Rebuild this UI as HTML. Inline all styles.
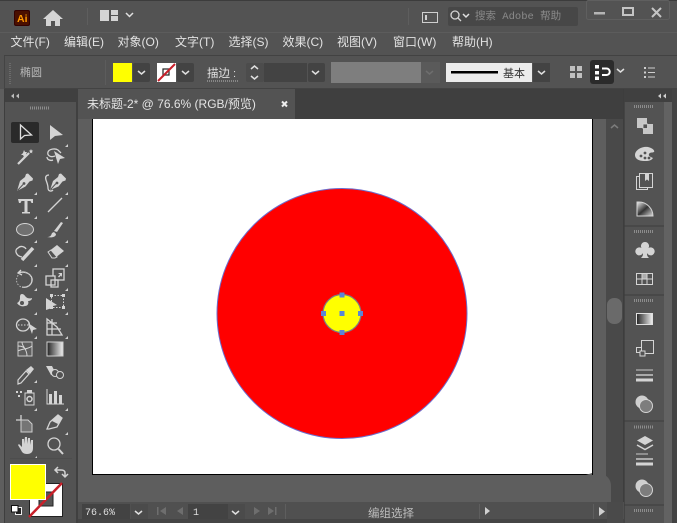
<!DOCTYPE html>
<html><head><meta charset="utf-8"><style>
html,body{margin:0;padding:0;background:#535353;width:677px;height:523px;overflow:hidden}
svg{display:block}
text{font-family:"Liberation Sans","Noto Sans CJK SC",sans-serif}
.m{font-size:12px;fill:#e2e2e2}
.ic{fill:none;stroke:#d4d4d4;stroke-width:1.3}
.f{fill:#d4d4d4}
.ch{fill:none;stroke:#e0e0e0;stroke-width:1.5}
.d{fill:#434343}
</style></head><body>
<svg width="677" height="523" viewBox="0 0 677 523" xmlns="http://www.w3.org/2000/svg">
<rect width="677" height="523" fill="#535353"/>
<!-- bars -->
<rect x="0" y="0" width="677" height="1" fill="#3c3c3c"/>
<rect x="0" y="32" width="677" height="1" fill="#5c5c5c"/>
<rect x="4" y="55" width="673" height="1" fill="#424242"/>
<rect x="4" y="56" width="1" height="33" fill="#444"/>
<rect x="5" y="88" width="672" height="1" fill="#434343"/>
<!-- title -->
<rect x="14" y="10" width="16" height="16" rx="2" fill="#330000"/>
<rect x="15" y="11" width="14" height="14" rx="1.5" fill="#4a0f00"/>
<text x="17" y="22" font-size="10.5" font-weight="bold" fill="#ff9a00">Ai</text>
<path class="f" d="M53 10l10 9h-3v7h-5v-5h-4v5h-5v-7h-3z"/>
<rect x="87" y="8" width="1" height="17" fill="#5e5e5e"/>
<path class="f" d="M100 10h9v11h-9zM111 10h7v5h-7zM111 16h7v5h-7z"/>
<path class="ch" d="M126 13l3.500 3.500 3.500-3.500"/>
<rect x="408" y="8" width="1" height="17" fill="#5e5e5e"/>
<rect x="422.500" y="12.500" width="15" height="10" fill="none" stroke="#cfcfcf"/>
<path d="M426 15v5" stroke="#cfcfcf" fill="none" stroke-width="2"/>
<rect x="448" y="7" width="130" height="19" rx="2" fill="#474747"/>
<circle cx="455" cy="15" r="4" class="ic"/><path class="ic" d="M458 18l3 3"/>
<path class="ch" d="M463 14l3 3 3-3" stroke-width="1.200"/>
<text x="475" y="19" font-size="10.500" fill="#8a8a8a" style="font-family:'Liberation Mono','Noto Sans CJK SC',monospace">搜索 Adobe 帮助</text>
<rect x="586.500" y="0.500" width="83" height="19" rx="2" fill="none" stroke="#5f5f5f"/>
<rect x="594" y="12" width="11" height="2.500" fill="#b5b5b5"/>
<rect x="623" y="8" width="10" height="7" fill="none" stroke="#c5c5c5" stroke-width="2"/>
<path d="M652 8l9 9M661 8l-9 9" stroke="#c5c5c5" stroke-width="2" fill="none"/>
<!-- menu -->
<text class="m" x="10.500" y="46">文件(F)</text>
<text class="m" x="64" y="46">编辑(E)</text>
<text class="m" x="117.500" y="46">对象(O)</text>
<text class="m" x="175" y="46">文字(T)</text>
<text class="m" x="228.500" y="46">选择(S)</text>
<text class="m" x="282.500" y="46">效果(C)</text>
<text class="m" x="337" y="46">视图(V)</text>
<text class="m" x="393" y="46">窗口(W)</text>
<text class="m" x="452" y="46">帮助(H)</text>
<!-- control -->
<path d="M10 63v21" stroke="#6b6b6b" stroke-width="2" stroke-dasharray="1 1"/>
<text x="20" y="76" font-size="11" fill="#b8b8b8">椭圆</text>
<rect x="105" y="60" width="1" height="25" fill="#5c5c5c"/>
<rect x="113" y="63" width="19" height="19" fill="#ffff00"/>
<rect x="133" y="63" width="17" height="19" rx="2" class="d"/>
<path class="ch" d="M138 71l3.500 3 3.500-3"/>
<rect x="157" y="63" width="19" height="19" fill="#fff"/>
<rect x="163" y="69" width="6" height="6" fill="none" stroke="#222" stroke-width="1.200"/>
<path d="M158 81l17-17" stroke="#c8202a" stroke-width="2"/>
<rect x="177" y="63" width="17" height="19" rx="2" class="d"/>
<path class="ch" d="M182 71l3.500 3 3.500-3"/>
<text x="207" y="77" font-size="11.500" fill="#e0e0e0">描边</text>
<path d="M207 81h32" stroke="#bbb" stroke-dasharray="1 1"/>
<text x="233" y="77" font-size="11" fill="#ddd">:</text>
<rect x="246" y="63" width="18" height="19" rx="2" fill="#4c4c4c"/>
<path class="ch" d="M251 69l3.500-3 3.500 3M251 76l3.500 3 3.500-3"/>
<rect x="264" y="63" width="43" height="19" class="d"/>
<rect x="308" y="63" width="17" height="19" rx="2" class="d"/>
<path class="ch" d="M312 71l3.500 3 3.500-3"/>
<rect x="331" y="62" width="90" height="21" fill="#7e7e7e"/>
<rect x="421" y="62" width="19" height="21" fill="#5a5a5a"/>
<path d="M426 71l3.500 3 3.500-3" fill="none" stroke="#6e6e6e" stroke-width="1.500"/>
<rect x="446" y="63" width="86" height="19" fill="#ececec"/>
<rect x="451" y="71" width="47" height="2.500" fill="#000"/>
<text x="503" y="77" font-size="11" fill="#333">基本</text>
<rect x="533" y="63" width="17" height="19" class="d"/>
<path class="ch" d="M538 71l3.500 3 3.500-3"/>
<path class="f" d="M570 66h5v5h-5zM577 66h5v5h-5zM570 73h5v5h-5zM577 73h5v5h-5z" opacity=".85"/>
<rect x="590" y="60" width="24" height="24" rx="3" fill="#2b2b2b"/>
<rect x="595" y="65" width="4" height="3.500" fill="#fff"/><rect x="595" y="71" width="4" height="3.500" fill="#fff"/><rect x="595" y="76.500" width="4" height="3.500" fill="#fff"/>
<path d="M602 68.500h4.500a3.200 3.200 0 0 1 0 6.500h-4.500" fill="none" stroke="#fff" stroke-width="2"/>
<path class="ch" d="M617 69l3.500 3 3.500-3"/>
<path d="M644 67h2v2h-2zM644 71.500h2v2h-2zM644 76h2v2h-2z" fill="#cfcfcf"/>
<path d="M648 68h7M648 72.500h7M648 77h7" stroke="#cfcfcf"/>
<!-- tab row -->
<rect x="0" y="89" width="677" height="11" fill="#404040"/>
<rect x="78" y="89" width="546" height="30" fill="#3f3f3f"/>
<rect x="78" y="89" width="217" height="30" fill="#535353"/>
<text x="87" y="108" font-size="12" fill="#e4e4e4">未标题-2* @ 76.6% (RGB/预览)</text>
<path d="M282 101.500l5 5M287 101.500l-5 5" stroke="#eee" stroke-width="2"/>
<!-- left toolbar -->
<rect x="0" y="89" width="5" height="434" fill="#5e5e5e"/>
<rect x="5" y="89" width="71" height="412" fill="#535353"/>
<rect x="5" y="89" width="71" height="13" fill="#404040"/>
<rect x="4" y="89" width="1" height="434" fill="#3e3e3e"/>
<rect x="76" y="89" width="2" height="434" fill="#404040"/>
<rect x="5" y="501" width="71" height="22" fill="#535353"/>
<path d="M14 93.500l-3 2.500 3 2.500zM19 93.500l-3 2.500 3 2.500z" fill="#bcbcbc"/>
<path d="M30 108h20" stroke="#8c8c8c" stroke-width="3" stroke-dasharray="1 1"/>
<rect x="11" y="122" width="28" height="21" rx="2" fill="#2a2a2a"/>
<!-- row 1 -->
<path d="M20.500 125v14l4-3.500 7-.5z" fill="none" stroke="#e0e0e0" stroke-width="1.300"/>
<path class="f" d="M50 125v15l5-4 8-1z"/>
<!-- row 2 -->
<path d="M18 164l11-11" stroke="#d4d4d4" stroke-width="2.200"/>
<path class="f" d="M24 150l1 2 2 0-1 2 1 2-2 0-1 1-1-2-2 0 2-2zM31 149l.7 1.500 1.500.3-1.200 1 .3 1.600-1.300-.9-1.300.9.300-1.600-1.200-1 1.500-.3z"/>
<path class="ic" d="M55 156c-5 2-8-1-7-4 1-3 7-4 10-2l3 3M47 157c0 3 4 4 6 3"/>
<path class="f" d="M54 151l11 7-5 1-2 5z"/>
<!-- row 3: pen and curvature pen -->
<path class="f" d="M17 191l3-10 5-4 1-3 2-.5 5 5-.5 2-3 1-4 5z"/>
<path d="M17.500 190.500l5.500-6" stroke="#535353" stroke-width="1"/><circle cx="24" cy="183.500" r="1.400" fill="#535353"/>
<path class="f" d="M50 190l3-9 5-4 1-3 2-.5 5 5-.5 2-3 1-4 5z"/>
<path d="M50.500 189.500l5.500-6" stroke="#535353" stroke-width="1"/><circle cx="57" cy="183" r="1.400" fill="#535353"/>
<path class="ic" d="M49 175c-3 0-4 2-3 5s2 5 2 8c0 3 3 4 5 2"/>
<!-- row 4 -->
<path d="M18 199h15v4h-1.500l-1-2h-3v11h2.500v1.500h-8v-1.500h2.500v-11h-3l-1 2h-1.500z" fill="#d4d4d4"/>
<path d="M48 212l14-14" stroke="#d4d4d4" stroke-width="1.300"/>
<!-- row 5 -->
<ellipse cx="25" cy="229.500" rx="8.500" ry="6" fill="#707070" stroke="#d4d4d4" stroke-width="1"/>
<path class="f" d="M47 237c3 0 4-1 5-4l2-1 2 2c0 3-4 4-9 3zM54 231l7-9 2 1-6 9z"/>
<!-- row 6 -->
<path class="ic" d="M22 257c-6-1-8-7-4-9 3-3 7-1 8 1"/>
<path d="M22 260l11-12" stroke="#d4d4d4" stroke-width="3.500"/>
<path class="f" d="M48 252l9-7 7 6-9 7z"/><path d="M48 252l3-2 6 7-2 1h-3z" fill="#535353" stroke="#d4d4d4"/>
<!-- row 7 -->
<path class="ic" d="M21 270l-3 3 4 2M18 273c8-3 15 2 14 8-1 5-6 7-10 6" /><circle cx="24" cy="280" r="7.500" fill="none" stroke="#b8b8b8" stroke-width="1" stroke-dasharray="1.500 1.500"/>
<rect x="53" y="269" width="11" height="11" class="ic"/><rect x="46" y="276" width="9" height="9" class="ic" style="fill:#535353"/><rect x="51" y="280" width="7" height="7" class="ic"/>
<path class="f" d="M58 273h4v4l-1-1.500-2 2-1-1 2-2z"/>
<!-- row 8 -->
<path class="f" d="M17 303c2-1 3-3 3-5s0-4 2-4 3 2 4 3 3 2 6 1c0 2-2 3-4 3 1 2 0 5-3 5-3 1-6 0-8-3z"/><circle cx="22" cy="303" r="2" fill="#535353"/>
<path class="f" d="M46 298l11 7-4 1-1 2-6 2z"/>
<rect x="51.500" y="295.500" width="12" height="12" fill="none" stroke="#d4d4d4" stroke-dasharray="1.500 1.500"/>
<path class="f" d="M50 294h3v3h-3zM62 294h3v3h-3zM62 306h3v3h-3zM50 306h3v3h-3z"/>
<!-- row 9 -->
<ellipse cx="23" cy="325" rx="6.500" ry="6" class="ic"/><path d="M18 325h11" stroke="#d4d4d4" stroke-dasharray="1.500 1.500"/>
<path class="f" d="M28 323l9 6-4 1-1 4z"/>
<path class="ic" d="M47 319v16h15l-5-8zM47 323h10M47 329h14M52 319v16" stroke-width="1"/>
<!-- row 10 -->
<rect x="18" y="342" width="14" height="14" fill="#5e5e5e" stroke="#c8c8c8"/>
<path d="M18 351c5-3 9-1 14-5M22 342c0 5 5 6 5 14M18 346c4 0 6 1 8 4" stroke="#d4d4d4" fill="none"/>
<rect x="47" y="342" width="16" height="14" fill="url(#gr)" stroke="#cfcfcf"/>
<!-- row 11 -->
<path d="M18 380l8-9 3 3-8 9-3 1z" fill="none" stroke="#d4d4d4" stroke-width="1.200"/>
<path class="f" d="M26 370l5-4 3 3-4 5z"/>
<path class="f" d="M46 366h6l2 4 2 1v5l-5-1z"/><circle cx="55" cy="373" r="3.500" fill="#535353" stroke="#d4d4d4"/><circle cx="60" cy="375" r="3.500" fill="#535353" stroke="#d4d4d4"/>
<!-- row 12 -->
<path class="f" d="M16 391h2v2h-2zM20 391h2v2h-2zM18 395h2v2h-2z"/>
<rect x="25" y="393" width="9" height="12" fill="none" stroke="#d4d4d4"/><circle cx="29.500" cy="399" r="2.500" fill="none" stroke="#d4d4d4" stroke-width="1.500"/><rect x="27" y="390" width="5" height="3" fill="#d4d4d4"/>
<path d="M47 389v15h17" fill="none" stroke="#d4d4d4"/><path class="f" d="M49 394h3v10h-3zM54 391h3v13h-3zM59 395h3v9h-3z"/>
<!-- row 13 -->
<path class="ic" d="M16 420h5M21 415v5"/>
<path d="M21 420h7l4 4v8H21z" fill="#757575" stroke="#cfcfcf"/>
<path class="ic" d="M47 429l3-7 8-7 4 3-5 9-8 2z"/><path class="f" d="M52 421l6-6 4 3-4 6z"/>
<!-- row 14 -->
<path class="f" d="M19 444l3 3v-8h2v5l1-7h2v7l1-6h2v7l1-5h2v8c0 4-2 6-6 6-4 0-5-2-6-4l-3-5z"/>
<circle cx="54" cy="444" r="6" class="ic"/><path d="M58.500 449l4.500 5" stroke="#d4d4d4" stroke-width="2"/>
<!-- tool arrows -->
<g fill="#cfcfcf">
<path d="M37 195v-3l-3 3zM68 195v-3l-3 3zM37 219v-3l-3 3zM68 219v-3l-3 3zM37 243v-3l-3 3zM68 243v-3l-3 3zM37 267v-3l-3 3zM68 267v-3l-3 3zM37 291v-3l-3 3zM68 291v-3l-3 3zM37 315v-3l-3 3zM68 315v-3l-3 3zM37 339v-3l-3 3zM68 339v-3l-3 3zM37 383v-3l-3 3zM68 435v-3l-3 3zM37 459v-3l-3 3zM68 147v-3l-3 3zM37 411v-3l-3 3zM68 411v-3l-3 3z"/>
</g>
<rect x="10" y="458" width="62" height="1" fill="#4d4d4d"/>
<!-- color -->
<rect x="29.500" y="483.500" width="33" height="33" fill="#fff" stroke="#222"/>
<rect x="39" y="492" width="14" height="14" fill="#555" stroke="#222" stroke-width="1"/>
<path d="M29 517l33-34" stroke="#c8202a" stroke-width="2.500"/>
<rect x="10.500" y="464.500" width="35" height="35" fill="#ffff00" stroke="#fff"/>
<path d="M55 470h6c3 0 4 1 4 3v3M62 474l3 3 3-3M58 467l-3 3 3 3" fill="none" stroke="#d4d4d4" stroke-width="1.500"/>
<rect x="15.500" y="507.500" width="6" height="7" fill="#222" stroke="#eee"/>
<rect x="11.500" y="505.500" width="6.500" height="6.500" fill="#fff" stroke="#111"/>
<!-- canvas -->
<rect x="78" y="119" width="546" height="383" fill="#5e5e5e"/>
<rect x="92" y="119" width="501" height="356" fill="#000"/>
<rect x="93" y="119" width="499" height="355" fill="#fff"/>
<path d="M586 475l6-2v2z" fill="#5e5e5e"/>
<path d="M593 475h13v25H78v-25z" fill="#5e5e5e"/>
<rect x="606" y="119" width="17" height="383" fill="#494949"/>
<rect x="623" y="89" width="1" height="434" fill="#3d3d3d"/>
<path d="M611 128l3.500-3 3.500 3" fill="none" stroke="#7c7c7c" stroke-width="1.500"/>
<rect x="607" y="298" width="15" height="26" rx="7" fill="#6a6a6a"/>
<path d="M593 474h7c6 0 11 5 11 12v16h-18z" fill="#5e5e5e"/>
<!-- circles -->
<circle cx="342" cy="313.500" r="125" fill="#ff0000" stroke="#6c6ccc" stroke-width="1"/>
<circle cx="342" cy="313.500" r="19" fill="#ffff00" stroke="#7d7d80" stroke-width="1.200"/>
<g fill="#5a86d8">
<rect x="339.500" y="311" width="5" height="5"/>
<rect x="339.500" y="292.500" width="5" height="5"/>
<rect x="339.500" y="330" width="5" height="5"/>
<rect x="321" y="311" width="5" height="5"/>
<rect x="358" y="311" width="5" height="5"/>
</g>
<!-- status bar -->
<rect x="78" y="502" width="546" height="21" fill="#505050"/>
<rect x="78" y="519" width="546" height="4" fill="#454545"/>
<rect x="82" y="504" width="48" height="15" fill="#434343"/>
<text x="85" y="515" font-size="10" fill="#dedede" style="font-family:'Liberation Mono',monospace">76.6%</text>
<rect x="131" y="504" width="17" height="15" fill="#4b4b4b"/>
<path class="ch" d="M135 511l3.500 3 3.500-3"/>
<path d="M157 507h1.500v8H157zM166 507l-6 4 6 4zM183 507l-6 4 6 4z" fill="#6e6e6e"/>
<rect x="188" y="504" width="40" height="15" fill="#434343"/>
<text x="193" y="515" font-size="10" fill="#dedede" style="font-family:'Liberation Mono',monospace">1</text>
<rect x="228" y="504" width="17" height="15" fill="#4b4b4b"/>
<path class="ch" d="M232 511l3.500 3 3.500-3"/>
<path d="M254 507l6 4-6 4zM268 507l6 4-6 4zM275 507h1.500v8H275z" fill="#6e6e6e"/>
<rect x="285" y="504" width="1" height="15" fill="#5e5e5e"/>
<text x="368" y="517" font-size="11.500" fill="#bcbcbc">编组选择</text>
<rect x="479" y="504" width="1" height="15" fill="#5e5e5e"/>
<path d="M485 507l5 4-5 4z" fill="#d0d0d0"/>
<rect x="593" y="504" width="1" height="15" fill="#5e5e5e"/>
<path d="M599 507l6 4.500-6 4.500z" fill="#d0d0d0"/>
<rect x="607" y="502" width="16" height="21" fill="#4a4a4a"/>
<!-- right panel -->
<rect x="624" y="89" width="53" height="434" fill="#535353"/>
<rect x="624" y="89" width="53" height="13" fill="#404040"/>
<path d="M661 93.500l-3 2.500 3 2.500zM666 93.500l-3 2.500 3 2.500z" fill="#cfcfcf"/>
<rect x="664" y="102" width="8" height="421" fill="#626262"/>
<rect x="672" y="89" width="5" height="434" fill="#434343"/>
<rect x="624" y="102" width="1" height="421" fill="#444"/>
<g stroke="#8c8c8c" fill="none" stroke-dasharray="1 1" stroke-width="3">
<path d="M634 106.500h20M634 231.500h20M634 300.500h20M634 427h20M634 510.500h20"/>
</g>
<path d="M624 226h40M624 295h40M624 421h40M624 505h40" stroke="#3c3c3c"/>
<!-- panel icons -->
<path class="f" d="M637 118h10v6h6v10h-10v-6h-6z" opacity=".9"/>
<rect x="643" y="124" width="4.500" height="4.500" fill="#535353" stroke="#d4d4d4" stroke-width=".8"/>
<path class="f" d="M635 155c0-5 7-9 13-8 5 1 7 4 6 5-2 1-4 0-5 2s2 3 4 4c-2 3-5 3-9 3-5 0-9-2-9-6z"/>
<g fill="#535353"><circle cx="641" cy="156" r="1.400"/><circle cx="645" cy="153" r="1.400"/><circle cx="645" cy="158" r="1.400"/><circle cx="649" cy="158" r="1.400"/></g>
<rect x="636.500" y="176.500" width="11" height="13" fill="none" stroke="#d4d4d4"/>
<rect x="639.500" y="173.500" width="13" height="14" fill="#535353" stroke="#d4d4d4"/>
<path class="f" d="M645 174h4v7l-2-1.500-2 1.500z"/>
<path d="M637 202h2c8 0 14 7 14 14h-16z" fill="url(#gr2)" stroke="#d4d4d4"/>
<path class="f" d="M645 242a4 4 0 0 1 3.500 6 4 4 0 1 1-1.500 5c0 2 0 3 2 5h-8c2-2 2-3 2-5a4 4 0 1 1-1.500-5 4 4 0 0 1 3.500-6z"/>
<rect x="636.500" y="273.500" width="16" height="11" fill="none" stroke="#d4d4d4"/>
<path d="M642 274v10M647 274v10M637 279h15" stroke="#d4d4d4"/>
<path class="f" d="M642 274h5v5h-5z" opacity=".7"/>
<rect x="636.500" y="313.500" width="16" height="11" fill="url(#gr)" stroke="#e0e0e0"/>
<rect x="641.500" y="340.500" width="12" height="13" fill="none" stroke="#d4d4d4"/>
<rect x="636.500" y="347.500" width="5" height="5" fill="#535353" stroke="#d4d4d4"/>
<rect x="640" y="351" width="5" height="5" fill="#535353" stroke="#d4d4d4"/>
<path d="M636 370h17" stroke="#c8c8c8"/><path d="M636 375h17" stroke="#c8c8c8" stroke-width="1.500"/><path d="M636 380h17" stroke="#d4d4d4" stroke-width="3"/>
<circle cx="642" cy="402" r="6.500" fill="#cfcfcf"/><circle cx="646" cy="406" r="6.500" fill="#7d7d7d" stroke="#d4d4d4"/>
<path class="f" d="M645 436l8 4.500-8 4.500-8-4.500z"/><path d="M637 445l8 4.500 8-4.500" fill="none" stroke="#d4d4d4" stroke-width="1.500"/>
<path d="M636 454h12" stroke="#c8c8c8"/><path d="M636 459h17" stroke="#c8c8c8" stroke-width="1.500"/><path d="M636 464h17" stroke="#d4d4d4" stroke-width="3"/>
<circle cx="642" cy="486" r="6.500" fill="#cfcfcf"/><circle cx="646" cy="490" r="6.500" fill="#7d7d7d" stroke="#d4d4d4"/>
<defs>
<linearGradient id="gr"><stop offset="0" stop-color="#222"/><stop offset="1" stop-color="#f0f0f0"/></linearGradient>
<linearGradient id="gr2" x1="0" y1="0" x2="1" y2="1"><stop offset="0" stop-color="#f0f0f0"/><stop offset=".5" stop-color="#333"/><stop offset="1" stop-color="#ddd"/></linearGradient>
</defs>
</svg>
</body></html>
